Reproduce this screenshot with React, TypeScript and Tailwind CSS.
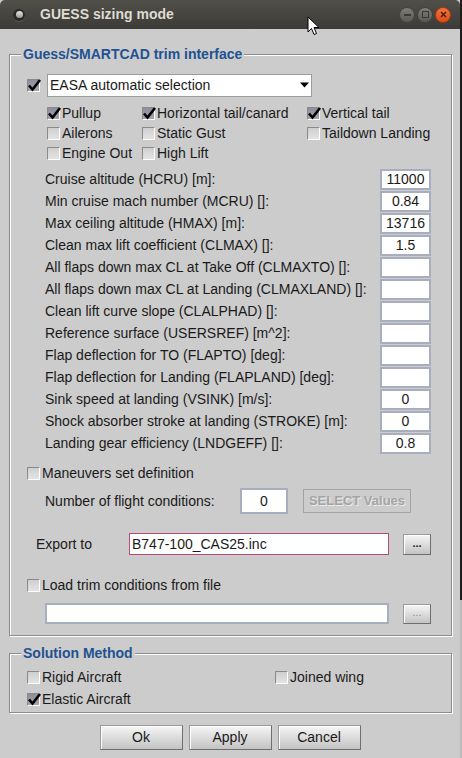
import React from 'react';

type CheckProps = { checked?: boolean; label?: string; className?: string };

function CheckBox({ checked = false }: { checked?: boolean }) {
    return (
        <span
            className={`relative inline-block w-[13px] h-[13px] shrink-0 border border-t-[#8a8a8a] border-l-[#8a8a8a] border-r-white border-b-white ${
                checked ? 'bg-gradient-to-b from-[#8d8d9b] to-[#a4a4b0]' : 'bg-gradient-to-b from-[#cfcfcf] to-[#e4e4e4]'
            }`}
        >
            {checked && (
                <svg className="absolute -left-[1px] -top-[2px]" width="15" height="15" viewBox="0 0 15 15">
                    <path d="M2 7.5 L5.5 11.5 L13 2" fill="none" stroke="#000" strokeWidth="2.6" />
                </svg>
            )}
        </span>
    );
}

function Check({ checked = false, label, className = '' }: CheckProps) {
    return (
        <label className={`flex items-center gap-[2px] h-[20px] ${className}`}>
            <CheckBox checked={checked} />
            <span>{label}</span>
        </label>
    );
}

function Field({ value = '', className = '' }: { value?: string; className?: string }) {
    return (
        <div
            className={`flex items-center justify-center bg-white border-2 border-[#a9aebf] text-[14px] leading-none ${className}`}
        >
            {value}
        </div>
    );
}

function Btn({ children, className = '' }: { children: React.ReactNode; className?: string }) {
    return (
        <button
            type="button"
            className={`flex items-center justify-center border border-t-[#9a9a9a] border-l-[#9a9a9a] border-r-[#6e6e6e] border-b-[#6e6e6e] bg-gradient-to-b from-[#f6f6f6] to-[#c3c3c3] shadow-[inset_1px_1px_0_#fff] ${className}`}
        >
            {children}
        </button>
    );
}

const params: [string, string][] = [
    ['Cruise altitude (HCRU) [m]:', '11000'],
    ['Min cruise mach number (MCRU) []:', '0.84'],
    ['Max ceiling altitude (HMAX) [m]:', '13716'],
    ['Clean max lift coefficient (CLMAX) []:', '1.5'],
    ['All flaps down max CL at Take Off (CLMAXTO) []:', ''],
    ['All flaps down max CL at Landing (CLMAXLAND) []:', ''],
    ['Clean lift curve slope (CLALPHAD) []:', ''],
    ['Reference surface (USERSREF) [m^2]:', ''],
    ['Flap deflection for TO (FLAPTO) [deg]:', ''],
    ['Flap deflection for Landing (FLAPLAND) [deg]:', ''],
    ['Sink speed at landing (VSINK) [m/s]:', '0'],
    ['Shock absorber stroke at landing (STROKE) [m]:', '0'],
    ['Landing gear efficiency (LNDGEFF) []:', '0.8'],
];

const etched =
    'border border-[#8c8c8c] shadow-[1px_1px_0_#fff,inset_1px_1px_0_#fff] m-0 p-0 min-w-0';
const legend = 'ml-[11px] px-[2px] h-[18px] leading-[18px] bg-[#cccccc] font-bold text-[14px] text-[#1f5391]';

export default function App() {
    return (
        <div className="flex w-[462px] h-[758px] overflow-hidden bg-[#2a2a2a] font-['Liberation_Sans',Arial,sans-serif] text-[14px] text-[#1a1a1a]">
            <div className="relative flex flex-col w-[460px] h-full bg-[#cccccc]">
                {/* title bar */}
                <div className="flex items-center h-[29px] shrink-0 rounded-t-[5px] bg-gradient-to-b from-[#504f4a] to-[#3c3b37] px-[13px]">
                    <span className="flex items-center justify-center w-[12px] h-[12px] rounded-full bg-[#2b2a27] shadow-[0_1px_0_#5a5954]">
                        <span className="w-[7px] h-[7px] rounded-full bg-gradient-to-b from-[#e8e8e8] to-[#9a9a9a]" />
                    </span>
                    <span className="ml-[15px] font-bold text-[14px] text-[#dfdbd2]">GUESS sizing mode</span>
                    <div className="ml-auto flex items-center gap-[2px] mr-[-4px]">
                        <span className="flex items-center justify-center w-[16px] h-[16px] rounded-full bg-gradient-to-b from-[#7d7c77] to-[#5a5955] border border-[#44433f]">
                            <span className="w-[7px] h-[2px] bg-[#3a3935]" />
                        </span>
                        <span className="flex items-center justify-center w-[16px] h-[16px] rounded-full bg-gradient-to-b from-[#7d7c77] to-[#5a5955] border border-[#44433f]">
                            <span className="w-[7px] h-[7px] border-[1.5px] border-[#3a3935]" />
                        </span>
                        <span className="flex items-center justify-center w-[16px] h-[16px] rounded-full bg-gradient-to-b from-[#f4733b] to-[#df4a14] border border-[#a8390f]">
                            <svg width="7" height="7" viewBox="0 0 7 7">
                                <path d="M1 1 L6 6 M6 1 L1 6" stroke="#4a2410" strokeWidth="1.6" />
                            </svg>
                        </span>
                    </div>
                </div>

                {/* mouse pointer */}
                <svg className="absolute left-[307px] top-[16px]" width="13" height="20" viewBox="0 0 13 20">
                    <path d="M1 1 L1 16 L4.5 12.5 L7 18.5 L9.5 17.5 L7 11.5 L12 11.5 Z" fill="#fff" stroke="#000" strokeWidth="1" />
                </svg>

                <div className="flex flex-col pt-[16px]">
                    <fieldset className={`${etched} ml-[9px] w-[443px] pb-[11px]`}>
                        <legend className={legend}>Guess/SMARTCAD trim interface</legend>

                        <div className="flex items-center mt-[11px] pl-[17px] h-[22px]">
                            <CheckBox checked />
                            <div className="relative flex items-center ml-[7px] w-[265px] h-[23px] bg-white border border-[#9c9c9c] pl-[2px]">
                                <span>EASA automatic selection</span>
                                <svg className="ml-auto mr-[2px]" width="9" height="6" viewBox="0 0 9 6">
                                    <path d="M0 0.5 H9 L4.5 5.5 Z" fill="#000" />
                                </svg>
                            </div>
                        </div>

                        <div className="grid grid-cols-[95px_165px_1fr] mt-[7px] pl-[37px]">
                            <Check checked label="Pullup" />
                            <Check checked label="Horizontal tail/canard" />
                            <Check checked label="Vertical tail" />
                            <Check label="Ailerons" />
                            <Check label="Static Gust" />
                            <Check label="Taildown Landing" />
                            <Check label="Engine Out" />
                            <Check label="High Lift" />
                        </div>

                        <div className="flex flex-col mt-[5px] pl-[35px] pr-[20px]">
                            {params.map(([label, value]) => (
                                <div key={label} className="flex items-center justify-between h-[22px]">
                                    <span>{label}</span>
                                    <Field value={value} className="w-[51px] h-[21px]" />
                                </div>
                            ))}
                        </div>

                        <Check label="Maneuvers set definition" className="mt-[9px] ml-[17px]" />

                        <div className="flex items-center mt-[5px] pl-[35px] h-[26px]">
                            <span className="w-[195px]">Number of flight conditions:</span>
                            <Field value="0" className="w-[48px] h-[26px]" />
                            <div className="flex items-center justify-center ml-[15px] w-[108px] h-[24px] border border-[#a3a3a3] bg-[#cccccc] font-bold text-[13px] text-[#a4a4a4] [text-shadow:1px_1px_0_#ececec]">
                                SELECT Values
                            </div>
                        </div>

                        <div className="flex items-center mt-[19px] pl-[26px] pr-[20px] h-[22px]">
                            <span className="w-[93px]">Export to</span>
                            <div className="flex items-center w-[260px] h-[22px] bg-white border border-[#b24b7c] pl-[2px]">
                                B747-100_CAS25.inc
                            </div>
                            <Btn className="ml-auto w-[28px] h-[21px] font-bold text-[11px] leading-none pb-[2px]">...</Btn>
                        </div>

                        <Check label="Load trim conditions from file" className="mt-[20px] ml-[17px]" />

                        <div className="flex items-center mt-[8px] pl-[35px] pr-[20px] h-[21px]">
                            <Field className="w-[344px] h-[21px]" />
                            <Btn className="ml-auto w-[28px] h-[20px] text-[11px] text-[#8a8a8a] leading-none pb-[2px]">...</Btn>
                        </div>
                    </fieldset>

                    <fieldset className={`${etched} ml-[9px] mt-[8px] w-[443px] pb-[2px]`}>
                        <legend className={`${legend} ml-[10px]`}>Solution Method</legend>
                        <div className="grid grid-cols-[248px_1fr] mt-[4px] pl-[17px]">
                            <Check label="Rigid Aircraft" className="h-[22px]" />
                            <Check label="Joined wing" className="h-[22px]" />
                            <Check checked label="Elastic Aircraft" className="h-[22px]" />
                        </div>
                    </fieldset>

                    <div className="flex justify-center gap-[6px] mt-[12px]">
                        <Btn className="w-[83px] h-[25px]">Ok</Btn>
                        <Btn className="w-[83px] h-[25px]">Apply</Btn>
                        <Btn className="w-[83px] h-[25px]">Cancel</Btn>
                    </div>
                </div>
            </div>
            <div className="flex flex-col w-[2px]">
                <div className="h-[600px] bg-[#1e1e1e]" />
                <div className="flex-1 bg-[#bdbdbd]" />
            </div>
        </div>
    );
}
